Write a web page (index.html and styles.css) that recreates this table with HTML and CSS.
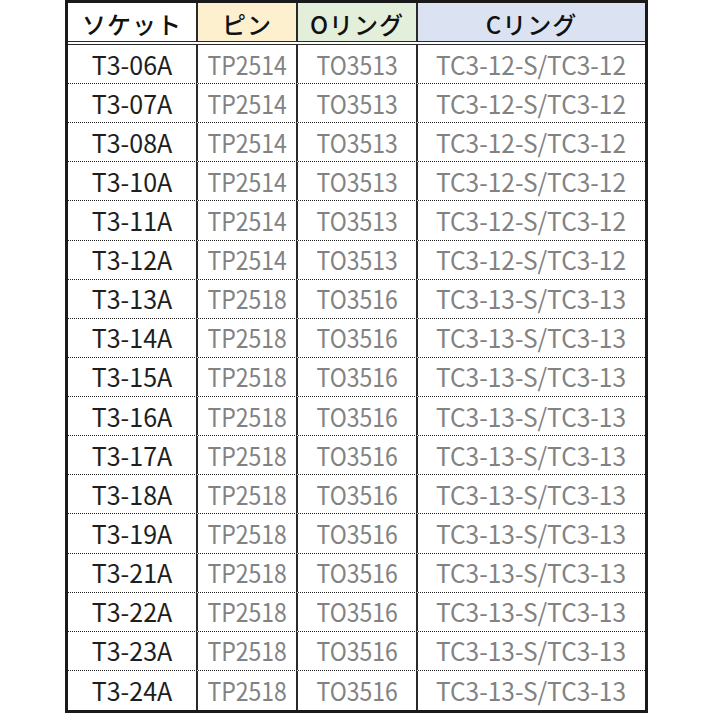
FILE: index.html
```html
<!DOCTYPE html>
<html lang="ja">
<head>
<meta charset="utf-8">
<link rel="stylesheet" href="styles.css">
</head>
<body>
<div class="page">
  <div class="sheet">
    <div class="head">
      <div class="hc h-socket"><span>ソケット</span></div>
      <div class="hc h-pin"><span>ピン</span></div>
      <div class="hc h-oring"><span>Oリング</span></div>
      <div class="hc h-cring"><span>Cリング</span></div>
    </div>
    <div class="body">
      <div class="row"><div class="c c1"><span>T3-06A</span></div><div class="c"><span>TP2514</span></div><div class="c"><span>TO3513</span></div><div class="c c4"><span>TC3-12-S/TC3-12</span></div></div>
      <div class="row"><div class="c c1"><span>T3-07A</span></div><div class="c"><span>TP2514</span></div><div class="c"><span>TO3513</span></div><div class="c c4"><span>TC3-12-S/TC3-12</span></div></div>
      <div class="row"><div class="c c1"><span>T3-08A</span></div><div class="c"><span>TP2514</span></div><div class="c"><span>TO3513</span></div><div class="c c4"><span>TC3-12-S/TC3-12</span></div></div>
      <div class="row"><div class="c c1"><span>T3-10A</span></div><div class="c"><span>TP2514</span></div><div class="c"><span>TO3513</span></div><div class="c c4"><span>TC3-12-S/TC3-12</span></div></div>
      <div class="row"><div class="c c1"><span>T3-11A</span></div><div class="c"><span>TP2514</span></div><div class="c"><span>TO3513</span></div><div class="c c4"><span>TC3-12-S/TC3-12</span></div></div>
      <div class="row"><div class="c c1"><span>T3-12A</span></div><div class="c"><span>TP2514</span></div><div class="c"><span>TO3513</span></div><div class="c c4"><span>TC3-12-S/TC3-12</span></div></div>
      <div class="row"><div class="c c1"><span>T3-13A</span></div><div class="c"><span>TP2518</span></div><div class="c"><span>TO3516</span></div><div class="c c4"><span>TC3-13-S/TC3-13</span></div></div>
      <div class="row"><div class="c c1"><span>T3-14A</span></div><div class="c"><span>TP2518</span></div><div class="c"><span>TO3516</span></div><div class="c c4"><span>TC3-13-S/TC3-13</span></div></div>
      <div class="row"><div class="c c1"><span>T3-15A</span></div><div class="c"><span>TP2518</span></div><div class="c"><span>TO3516</span></div><div class="c c4"><span>TC3-13-S/TC3-13</span></div></div>
      <div class="row"><div class="c c1"><span>T3-16A</span></div><div class="c"><span>TP2518</span></div><div class="c"><span>TO3516</span></div><div class="c c4"><span>TC3-13-S/TC3-13</span></div></div>
      <div class="row"><div class="c c1"><span>T3-17A</span></div><div class="c"><span>TP2518</span></div><div class="c"><span>TO3516</span></div><div class="c c4"><span>TC3-13-S/TC3-13</span></div></div>
      <div class="row"><div class="c c1"><span>T3-18A</span></div><div class="c"><span>TP2518</span></div><div class="c"><span>TO3516</span></div><div class="c c4"><span>TC3-13-S/TC3-13</span></div></div>
      <div class="row"><div class="c c1"><span>T3-19A</span></div><div class="c"><span>TP2518</span></div><div class="c"><span>TO3516</span></div><div class="c c4"><span>TC3-13-S/TC3-13</span></div></div>
      <div class="row"><div class="c c1"><span>T3-21A</span></div><div class="c"><span>TP2518</span></div><div class="c"><span>TO3516</span></div><div class="c c4"><span>TC3-13-S/TC3-13</span></div></div>
      <div class="row"><div class="c c1"><span>T3-22A</span></div><div class="c"><span>TP2518</span></div><div class="c"><span>TO3516</span></div><div class="c c4"><span>TC3-13-S/TC3-13</span></div></div>
      <div class="row"><div class="c c1"><span>T3-23A</span></div><div class="c"><span>TP2518</span></div><div class="c"><span>TO3516</span></div><div class="c c4"><span>TC3-13-S/TC3-13</span></div></div>
      <div class="row"><div class="c c1"><span>T3-24A</span></div><div class="c"><span>TP2518</span></div><div class="c"><span>TO3516</span></div><div class="c c4"><span>TC3-13-S/TC3-13</span></div></div>
    </div>
  </div>
</div>
</body>
</html>
```
FILE: styles.css
```css
html, body {
  margin: 0;
  padding: 0;
  background: #ffffff;
}

.page {
  display: flex;
  justify-content: center;
  width: 713px;
  height: 713px;
}

.sheet {
  box-sizing: border-box;
  width: 583px;
  height: 713px;
  border: 3px solid #1a1a1a;
  display: flex;
  flex-direction: column;
  font-family: "Noto Sans CJK JP", "Noto Sans", sans-serif;
}

.head {
  display: grid;
  grid-template-columns: 130px 100px 120px 227px;
  height: 42px;
  box-sizing: border-box;
  border-bottom: 4px double #2a2a2a;
}

.hc {
  box-sizing: border-box;
  display: flex;
  align-items: center;
  justify-content: center;
  border-right: 2px solid #2a2a2a;
  font-size: 24px;
  font-weight: 500;
  color: #111;
  letter-spacing: 1px;
}

.hc span {
  position: relative;
  top: 1px;
}

.h-socket { background: #ffffff; }
.h-pin { background: #fdf0cf; }
.h-oring { background: #e3eedb; }
.h-cring { background: #dbe3f3; border-right: none; }

.body {
  flex: 1;
  display: grid;
  grid-template-rows: repeat(17, 1fr);
}

.row {
  display: grid;
  grid-template-columns: 130px 100px 120px 227px;
  box-sizing: border-box;
  border-bottom: 1px dotted #222;
}

.row:last-child {
  border-bottom: none;
}

.c {
  box-sizing: border-box;
  display: flex;
  align-items: center;
  justify-content: center;
  border-right: 2px solid #2a2a2a;
  font-size: 25px;
  color: #828282;
  line-height: 1;
}

.c span {
  display: inline-block;
  transform: scaleX(0.92);
  white-space: nowrap;
}

.c1 {
  color: #1e1e1e;
}

.c1 span {
  transform: none;
}

.c4 {
  border-right: none;
}

.c4 span {
  transform: scaleX(0.98);
}
```
